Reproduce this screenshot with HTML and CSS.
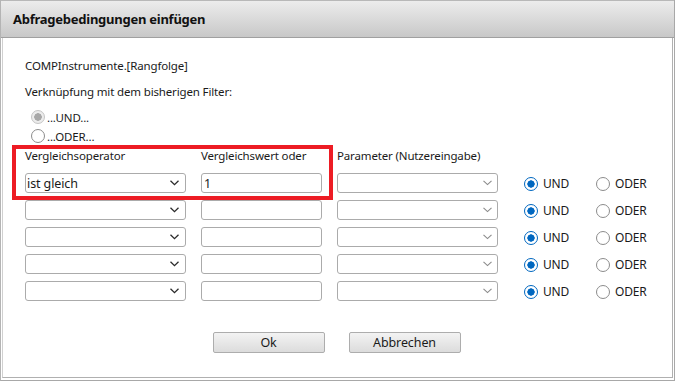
FILE: index.html
```html
<!DOCTYPE html>
<html lang="de">
<head>
<meta charset="utf-8">
<title>Abfragebedingungen einfügen</title>
<link rel="stylesheet" href="styles.css">
</head>
<body>
<div class="window">
  <div class="titlebar">Abfragebedingungen einfügen</div>
  <div class="panel">
    <div class="field-name">COMPInstrumente.[Rangfolge]</div>
    <div class="link-label">Verknüpfung mit dem bisherigen Filter:</div>
    <div class="top-radios">
      <div class="radio-line"><span class="radio disabled"></span><span>...UND...</span></div>
      <div class="radio-line"><span class="radio"></span><span>...ODER...</span></div>
    </div>
    <div class="grid">
      <div class="head">Vergleichsoperator</div>
      <div class="head">Vergleichswert oder</div>
      <div class="head">Parameter (Nutzereingabe)</div>
      <div class="head"></div>
      <div class="head"></div>

      <div class="select"><span class="val">ist gleich</span><svg class="chev" width="9" height="6" viewBox="0 0 9 6"><polyline points="0.5,0.8 4.5,4.6 8.5,0.8"/></svg></div>
      <div class="input"><span class="val">1</span></div>
      <div class="select param"><span class="val"></span><svg class="chev" width="9" height="6" viewBox="0 0 9 6"><polyline points="0.5,0.8 4.5,4.6 8.5,0.8"/></svg></div>
      <div class="opt"><span class="radio checked"></span>UND</div>
      <div class="opt"><span class="radio"></span>ODER</div>

      <div class="select"><span class="val"></span><svg class="chev" width="9" height="6" viewBox="0 0 9 6"><polyline points="0.5,0.8 4.5,4.6 8.5,0.8"/></svg></div>
      <div class="input"></div>
      <div class="select param"><span class="val"></span><svg class="chev" width="9" height="6" viewBox="0 0 9 6"><polyline points="0.5,0.8 4.5,4.6 8.5,0.8"/></svg></div>
      <div class="opt"><span class="radio checked"></span>UND</div>
      <div class="opt"><span class="radio"></span>ODER</div>

      <div class="select"><span class="val"></span><svg class="chev" width="9" height="6" viewBox="0 0 9 6"><polyline points="0.5,0.8 4.5,4.6 8.5,0.8"/></svg></div>
      <div class="input"></div>
      <div class="select param"><span class="val"></span><svg class="chev" width="9" height="6" viewBox="0 0 9 6"><polyline points="0.5,0.8 4.5,4.6 8.5,0.8"/></svg></div>
      <div class="opt"><span class="radio checked"></span>UND</div>
      <div class="opt"><span class="radio"></span>ODER</div>

      <div class="select"><span class="val"></span><svg class="chev" width="9" height="6" viewBox="0 0 9 6"><polyline points="0.5,0.8 4.5,4.6 8.5,0.8"/></svg></div>
      <div class="input"></div>
      <div class="select param"><span class="val"></span><svg class="chev" width="9" height="6" viewBox="0 0 9 6"><polyline points="0.5,0.8 4.5,4.6 8.5,0.8"/></svg></div>
      <div class="opt"><span class="radio checked"></span>UND</div>
      <div class="opt"><span class="radio"></span>ODER</div>

      <div class="select"><span class="val"></span><svg class="chev" width="9" height="6" viewBox="0 0 9 6"><polyline points="0.5,0.8 4.5,4.6 8.5,0.8"/></svg></div>
      <div class="input"></div>
      <div class="select param"><span class="val"></span><svg class="chev" width="9" height="6" viewBox="0 0 9 6"><polyline points="0.5,0.8 4.5,4.6 8.5,0.8"/></svg></div>
      <div class="opt"><span class="radio checked"></span>UND</div>
      <div class="opt"><span class="radio"></span>ODER</div>
    </div>
    <div class="buttons">
      <button class="btn">Ok</button>
      <button class="btn">Abbrechen</button>
    </div>
    <div class="highlight"></div>
  </div>
</div>
</body>
</html>
```
FILE: styles.css
```css
* { box-sizing: border-box; }
html, body {
  margin: 0;
  padding: 0;
  background: #ffffff;
}
body {
  width: 675px;
  height: 381px;
  overflow: hidden;
  font-family: "Noto Sans", "Open Sans", sans-serif;
  font-size: 11.5px;
  letter-spacing: -0.15px;
  color: #1a1a1a;
}
.window {
  width: 675px;
  height: 381px;
  display: flex;
  flex-direction: column;
  border-left: 1px solid #b4b4b4;
  border-right: 1px solid #a8a8a8;
  border-bottom: 1px solid #a8a8a8;
}
.titlebar {
  height: 38px;
  flex: none;
  background: linear-gradient(#ececec, #c8c8c8);
  border-top: 1px solid #b8b8b8;
  border-bottom: 1px solid #a0a0a0;
  padding-left: 12px;
  font-weight: bold;
  font-size: 13px;
  letter-spacing: -0.25px;
  line-height: 37px;
  color: #111;
}
.panel {
  position: relative;
  flex: 1;
  margin: 0 1px 2px 1px;
  border-left: 1px solid #d0d0d0;
  border-right: 1px solid #b0b0b0;
  border-bottom: 1px solid #b0b0b0;
  padding: 20px 0 0 22px;
}
.field-name {
  line-height: 16px;
}
.link-label {
  margin-top: 10px;
  line-height: 16px;
}
.top-radios {
  margin-top: 9px;
  padding-left: 6px;
  display: flex;
  flex-direction: column;
  gap: 3px;
}
.radio-line {
  display: flex;
  align-items: center;
  gap: 2px;
  height: 16px;
}
.radio {
  display: inline-block;
  width: 14px;
  height: 14px;
  flex: none;
  border-radius: 50%;
  border: 1px solid #8c8c8c;
  background: #fff;
}
.radio.disabled {
  border-color: #c4c4c4;
  background: radial-gradient(circle, #a8a8a8 0 3.5px, #ececec 4px);
}
.radio.checked {
  border: 1.5px solid #0067c0;
  background: radial-gradient(circle, #0067c0 0 3.4px, #ffffff 3.9px);
}
.grid {
  margin-top: 4px;
  display: grid;
  grid-template-columns: 161px 121px 161px 68px auto;
  grid-auto-rows: 20px;
  grid-template-rows: 18px;
  column-gap: 15px;
  row-gap: 7px;
}
.grid > .head {
  line-height: 16px;
  align-self: start;
  white-space: nowrap;
}
.grid > .head:nth-child(4) { margin-left: 11px; }
.select, .input {
  height: 20px;
  border: 1px solid #ababab;
  border-radius: 3px;
  background: #fff;
  display: flex;
  align-items: center;
  padding: 0 5px 0 1px;
  font-size: 12.5px;
  letter-spacing: -0.1px;
}
.input { padding-left: 2px; }
.select .val { flex: 1; }
.chev polyline {
  fill: none;
  stroke: #2a2a2a;
  stroke-width: 1.3;
}
.select .chev { margin-right: 1px; }
.param .chev polyline { stroke: #8a8a8a; stroke-width: 1.1; }
.param .chev { margin-right: 0; }
.opt {
  display: flex;
  align-items: center;
  gap: 5px;
  font-size: 12px;
  padding-top: 1px;
}
.grid > .opt:nth-child(5n+4) { margin-left: 11px; }
.buttons {
  margin-top: 31px;
  display: flex;
  justify-content: center;
  gap: 24px;
  padding-right: 24px;
}
.btn {
  width: 112px;
  height: 21px;
  border: 1px solid #adadad;
  border-radius: 2px;
  background: linear-gradient(#f3f3f3, #dcdcdc);
  font-family: inherit;
  font-size: 12.5px;
  letter-spacing: -0.1px;
  color: #1a1a1a;
  padding: 0;
  line-height: 18px;
}
.highlight {
  position: absolute;
  left: 9px;
  top: 107px;
  width: 321px;
  height: 55px;
  border: 4px solid #ed1c24;
  pointer-events: none;
}
```
